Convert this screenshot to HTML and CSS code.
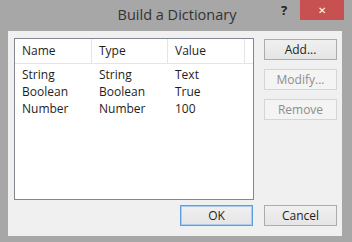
FILE: index.html
```html
<!DOCTYPE html>
<html lang="en">
<head>
<meta charset="UTF-8">
<title>Build a Dictionary</title>
<link rel="stylesheet" href="styles.css">
</head>
<body>
<div class="window">
  <div class="titlebar">
    <div class="title">Build a Dictionary</div>
    <div class="help">?</div>
    <div class="close">&#x2715;</div>
  </div>
  <div class="client">
    <div class="main">
      <div class="listview">
        <div class="lv-header">
          <div class="col col-name">Name</div>
          <div class="col col-type">Type</div>
          <div class="col col-value">Value</div>
          <div class="col col-rest"></div>
        </div>
        <div class="lv-row">
          <div class="col col-name">String</div>
          <div class="col col-type">String</div>
          <div class="col col-value">Text</div>
        </div>
        <div class="lv-row">
          <div class="col col-name">Boolean</div>
          <div class="col col-type">Boolean</div>
          <div class="col col-value">True</div>
        </div>
        <div class="lv-row">
          <div class="col col-name">Number</div>
          <div class="col col-type">Number</div>
          <div class="col col-value">100</div>
        </div>
      </div>
      <div class="side-buttons">
        <button class="btn">Add...</button>
        <button class="btn" disabled>Modify...</button>
        <button class="btn" disabled>Remove</button>
      </div>
    </div>
    <div class="footer">
      <button class="btn btn-default">OK</button>
      <button class="btn">Cancel</button>
    </div>
  </div>
</div>
</body>
</html>
```

FILE: styles.css
```css
body {
  margin: 0;
  font-family: "Open Sans", "Noto Sans", sans-serif;
}

.window {
  width: 352px;
  height: 242px;
  background-color: #a7a7a7;
  display: flex;
  flex-direction: column;
}

.titlebar {
  height: 31px;
  display: flex;
  position: relative;
}

.title {
  flex: 1;
  text-align: center;
  font-size: 14.5px;
  color: #333333;
  line-height: 29px;
  padding-left: 2px;
}

.help {
  position: absolute;
  left: 281px;
  top: 1px;
  font-size: 13px;
  font-weight: bold;
  color: #222222;
}

.close {
  position: absolute;
  left: 300px;
  top: 0;
  width: 44px;
  height: 20px;
  background-color: #c75050;
  color: #ffffff;
  font-size: 10px;
  text-align: center;
  line-height: 20px;
}

.client {
  flex: 1;
  margin: 0 10px 6px 8px;
  background-color: #f0f0f0;
  display: flex;
  flex-direction: column;
  padding: 7px 5px 10px 6px;
}

.main {
  display: flex;
  gap: 10px;
  flex: 1;
}

.listview {
  width: 240px;
  height: 162px;
  box-sizing: border-box;
  background-color: #ffffff;
  border: 1px solid #828790;
  font-size: 12px;
  color: #1e1e1e;
}

.lv-header {
  display: flex;
  height: 24px;
  border-bottom: 1px solid #e5e5e5;
  align-items: stretch;
  margin-bottom: 2px;
}

.lv-header .col {
  border-right: 1px solid #e5e5e5;
  line-height: 24px;
}

.lv-header .col-rest {
  border-right: none;
}

.lv-row {
  display: flex;
  height: 17px;
  line-height: 17px;
}

.col {
  box-sizing: border-box;
  padding-left: 7px;
}

.col-name { width: 77px; }
.col-type { width: 76px; }
.col-value { width: 77px; }
.col-rest { flex: 1; }

.side-buttons {
  display: flex;
  flex-direction: column;
  gap: 9px;
  padding-top: 1px;
}

.btn {
  width: 73px;
  height: 21px;
  font-family: "Open Sans", "Noto Sans", sans-serif;
  font-size: 12px;
  color: #1e1e1e;
  border: 1px solid #acacac;
  background: linear-gradient(#f0f0f0, #e5e5e5);
  padding: 0;
  margin: 0;
}

.btn:disabled {
  color: #8d8d8d;
  border-color: #d5d5d5;
  background: #f4f4f4;
}

.btn-default {
  border-color: #5c9fe0;
  box-shadow: inset 0 0 0 1px #a8cdf0;
}

.footer {
  display: flex;
  justify-content: flex-end;
  gap: 11px;
  padding-top: 5px;
}
```
